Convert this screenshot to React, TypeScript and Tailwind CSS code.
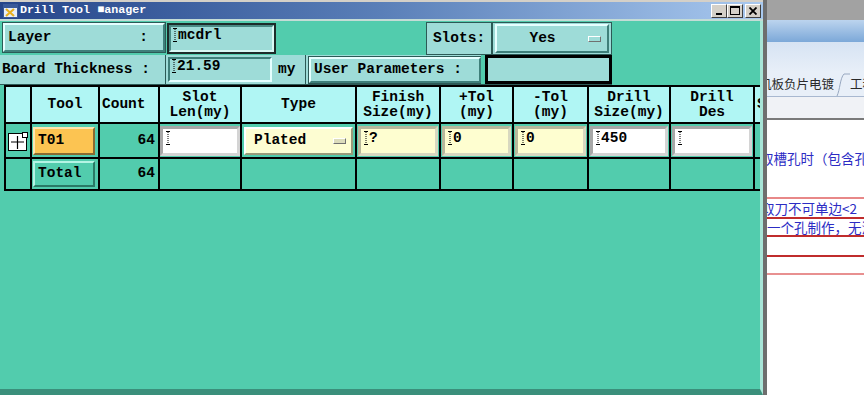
import React from 'react'

const mono = "font-['Liberation_Mono',monospace] font-bold text-[14.5px] text-black"
const raised = 'border-2 border-t-[#e6ffff] border-l-[#e6ffff] border-b-[#3f7f7a] border-r-[#3f7f7a]'
const cjk = "font-['Noto_Sans_CJK_SC',sans-serif]"

function Cursor() {
  return (
    <svg width="4" height="14" viewBox="0 0 4 14" className="shrink-0">
      <path d="M0 0.5h4M0 13.5h4" stroke="#000" strokeWidth="1" />
      <path d="M2 1v12" stroke="#000" strokeWidth="1" strokeDasharray="1 1" />
    </svg>
  )
}

function Indicator({ face }: { face: string }) {
  return (
    <span
      className={`w-[13px] h-[6px] border border-t-white border-l-white border-b-[#707070] border-r-[#707070] ${face}`}
    />
  )
}

function ExpandIcon() {
  return (
    <svg width="21" height="19" viewBox="0 0 21 19">
      <rect x="0.5" y="1.5" width="18" height="17" fill="#fff" stroke="#000" />
      <path d="M3 10h13M9.5 4v13" stroke="#000" strokeWidth="1.2" />
      <rect x="14.5" y="0.5" width="5" height="5" fill="#fff" stroke="#000" />
    </svg>
  )
}

function Field({ value, bg, border }: { value: string; bg: string; border: string }) {
  return (
    <div className={`h-full w-full border-[3px] ${border} ${bg} flex items-start pt-[2px] pl-[3px] gap-[1px]`}>
      <Cursor />
      <span className="leading-[15px]">{value}</span>
    </div>
  )
}

function WinButton({ children }: { children: React.ReactNode }) {
  return (
    <div className="w-[16px] h-[14px] bg-[#d4d0c8] border border-t-white border-l-white border-b-[#404040] border-r-[#404040] flex items-center justify-center">
      {children}
    </div>
  )
}

const headers: { lines: string[]; left?: boolean }[] = [
  { lines: [] },
  { lines: ['Tool'] },
  { lines: ['Count'], left: true },
  { lines: ['Slot', 'Len(my)'] },
  { lines: ['Type'] },
  { lines: ['Finish', 'Size(my)'] },
  { lines: ['+Tol', '(my)'] },
  { lines: ['-Tol', '(my)'] },
  { lines: ['Drill', 'Size(my)'] },
  { lines: ['Drill', 'Des'] },
  { lines: ['S'], left: true },
]

export default function App() {
  return (
    <div className="w-[864px] h-[395px] flex overflow-hidden bg-white">
      {/* Drill Tool Manager window */}
      <div className="w-[763px] h-full flex flex-col shrink-0">
        {/* Title bar */}
        <div className="h-[21px] border-t-2 border-t-[#d4d0c8] border-b-2 border-b-[#c4dcd6] bg-gradient-to-r from-[#26458a] via-[#5a7fb8] to-[#a9c9ef] flex items-center pl-[3px] pr-[2px]">
          <svg width="15" height="14" viewBox="0 0 15 14" className="shrink-0">
            <rect x="0.5" y="0.5" width="14" height="13" fill="#e8eef8" stroke="#3a5a9a" />
            <rect x="1" y="1" width="13" height="3" fill="#3a5a9a" />
            <path d="M3 5l8 7M11 5l-8 7" stroke="#e8b020" strokeWidth="2.2" />
          </svg>
          <span className="ml-[2px] font-['Liberation_Mono',monospace] font-bold text-[11.7px] text-white leading-none">
            Drill Tool ■anager
          </span>
          <div className="ml-auto flex items-center">
            <WinButton>
              <span className="w-[6px] h-[2px] bg-black mt-[7px]" />
            </WinButton>
            <WinButton>
              <span className="w-[10px] h-[9px] border border-black border-t-2" />
            </WinButton>
            <div className="w-[2px]" />
            <WinButton>
              <svg width="8" height="8" viewBox="0 0 8 8">
                <path d="M0.5 0.5l7 7M7.5 0.5l-7 7" stroke="#000" strokeWidth="1.8" />
              </svg>
            </WinButton>
          </div>
        </div>

        {/* Body */}
        <div className={`flex-1 bg-[#52ccad] overflow-hidden flex flex-col border-b-[6px] border-b-[#3b8f7b] border-r-[3px] border-r-[#a8e6d8] ${mono}`}>
          {/* Layer / Slots row */}
          <div className="h-[34px] flex items-start pt-[2px] pl-[3px]">
            <div className={`w-[162px] h-[29px] bg-[#9edcd8] ${raised} shadow-[0_0_0_1px_#2c5a56] flex items-center justify-between px-[3px]`}>
              <span>Layer</span>
              <span className="mr-[12px]">:</span>
            </div>
            <div className="ml-[2px] w-[109px] h-[31px] border-2 border-[#1c2c2a] bg-[#9edcd8]">
              <div className="h-full border-2 border-t-[#4a8a84] border-l-[#4a8a84] border-b-[#d8f8f4] border-r-[#d8f8f4] flex items-start pt-[1px] pl-[2px] gap-[1px]">
                <Cursor />
                <span className="leading-[14px]">mcdrl</span>
              </div>
            </div>
            <div className="ml-[150px] w-[186px] h-[33px] -mt-[1px] bg-[#9edcd8] border border-[#2c5a56] flex items-center">
              <div className="w-[66px] h-full flex items-center justify-center border-r-2 border-r-[#2c5a56]">Slots:</div>
              <div className={`ml-[2px] w-[114px] h-[29px] bg-[#9edcd8] ${raised} flex items-center pr-[6px]`}>
                <span className="flex-1 text-center">Yes</span>
                <Indicator face="bg-[#9edcd8]" />
              </div>
            </div>
          </div>

          {/* Board thickness row */}
          <div className="h-[30px] flex items-stretch">
            <div className="w-[612px] bg-[#9edcd8] flex items-center border-b border-b-[#2c5a56]">
              <div className="w-[166px] h-full flex items-center pl-[2px] border-r border-r-[#2c5a56]">Board Thickness :</div>
              <div className="ml-[2px] w-[104px] h-[25px] border-2 border-t-[#3f7f7a] border-l-[#3f7f7a] border-b-[#e6ffff] border-r-[#e6ffff] flex items-start pl-[2px] gap-[1px]">
                <Cursor />
                <span className="leading-[14px]">21.59</span>
              </div>
              <div className="w-[34px] h-full flex items-center pl-[6px] border-r border-r-[#2c5a56]">my</div>
              <div className={`ml-[3px] w-[172px] h-[26px] bg-[#9edcd8] ${raised} shadow-[0_0_0_1px_#2c5a56] flex items-center pl-[3px]`}>
                User Parameters :
              </div>
              <div className="w-[4px] h-full bg-[#52ccad]" />
              <div className="w-[127px] h-full border-[3px] border-black bg-[#9edcd8]" />
            </div>
          </div>

          {/* Tool table */}
          <div className="ml-[4px] grid grid-cols-[24px_66px_58px_80px_113px_82px_71px_73px_80px_82px_40px] grid-rows-[35px_33px_30px] gap-[2px] p-[2px] bg-black w-max">
            {headers.map((h, i) => (
              <div
                key={i}
                className={`bg-[#b0f6f4] flex flex-col justify-center leading-[15px] overflow-hidden ${h.left ? 'items-start pl-[2px]' : 'items-center'}`}
              >
                {h.lines.map((l) => (
                  <span key={l} className="whitespace-nowrap">{l}</span>
                ))}
              </div>
            ))}

            {/* T01 row */}
            <div className="bg-[#52ccad] flex items-center justify-center pt-[2px]">
              <ExpandIcon />
            </div>
            <div className="bg-[#52ccad] pl-[1px] pr-[3px] pt-[3px] pb-[2px]">
              <div className="h-full bg-[#fcc452] border-2 border-t-[#ffe6b0] border-l-[#ffe6b0] border-b-[#8a6a30] border-r-[#8a6a30] flex items-center pl-[3px]">
                T01
              </div>
            </div>
            <div className="bg-[#52ccad] flex items-center justify-end pr-[3px]">64</div>
            <div className="bg-[#52ccad] pt-[2px] pb-[1px]">
              <Field value="" bg="bg-white" border="border-t-[#a8a8a8] border-l-[#a8a8a8] border-b-[#d4d4d4] border-r-[#d4d4d4]" />
            </div>
            <div className="bg-[#52ccad] p-[2px] pt-[3px]">
              <div className="h-full bg-[#fdfdd2] border-2 border-t-white border-l-white border-b-[#9a9a7a] border-r-[#9a9a7a] flex items-center pl-[8px] pr-[5px]">
                <span className="flex-1">Plated</span>
                <Indicator face="bg-[#dcdcbc]" />
              </div>
            </div>
            <div className="bg-[#52ccad] p-[1px] pt-[2px]">
              <Field value="?" bg="bg-[#fefed0]" border="border-t-[#b8b89c] border-l-[#b8b89c] border-b-[#d8d8c0] border-r-[#d8d8c0]" />
            </div>
            <div className="bg-[#52ccad] p-[1px] pt-[2px]">
              <Field value="0" bg="bg-[#fefed0]" border="border-t-[#b8b89c] border-l-[#b8b89c] border-b-[#d8d8c0] border-r-[#d8d8c0]" />
            </div>
            <div className="bg-[#52ccad] p-[1px] pt-[2px]">
              <Field value="0" bg="bg-[#fefed0]" border="border-t-[#b8b89c] border-l-[#b8b89c] border-b-[#d8d8c0] border-r-[#d8d8c0]" />
            </div>
            <div className="bg-[#52ccad] p-[1px] pt-[2px]">
              <Field value="450" bg="bg-white" border="border-t-[#a8a8a8] border-l-[#a8a8a8] border-b-[#d4d4d4] border-r-[#d4d4d4]" />
            </div>
            <div className="bg-[#52ccad] p-[1px] pt-[2px]">
              <Field value="" bg="bg-white" border="border-t-[#a8a8a8] border-l-[#a8a8a8] border-b-[#d4d4d4] border-r-[#d4d4d4]" />
            </div>
            <div className="bg-[#52ccad]" />

            {/* Total row */}
            <div className="bg-[#52ccad]" />
            <div className="bg-[#52ccad] pl-[1px] pr-[3px] pt-[2px] pb-[2px]">
              <div className="h-full bg-[#52ccad] border-2 border-t-[#b4f4e4] border-l-[#b4f4e4] border-b-[#2a7a66] border-r-[#2a7a66] flex items-center pl-[3px]">
                Total
              </div>
            </div>
            <div className="bg-[#52ccad] flex items-center justify-end pr-[3px]">64</div>
            {Array.from({ length: 8 }).map((_, i) => (
              <div key={i} className="bg-[#52ccad]" />
            ))}
          </div>
        </div>
      </div>

      {/* Background application */}
      <div className="flex-1 flex flex-col border-l-4 border-l-[#6e6e6e] overflow-hidden">
        <div className="h-[20px] bg-[#a2a2a2] shrink-0" />
        <div className="h-[22px] bg-gradient-to-b from-[#bcd4ee] to-[#7ca8d8] shrink-0" />
        <div className="h-[30px] bg-gradient-to-b from-[#d6e3f3] to-[#e8eff8] shrink-0" />
        <div className={`h-[24px] bg-[#e8eff8] flex items-center text-[12.5px] text-[#2a2a2a] whitespace-nowrap ${cjk} shrink-0`}>
          <span className="-ml-[8px]">机板负片电镀</span>
          <svg width="14" height="24" viewBox="0 0 14 24" className="shrink-0 ml-[2px]">
            <path d="M1 24C4 18 4 6 8 2h6" stroke="#98a8c0" fill="none" />
          </svg>
          <span>工程</span>
        </div>
        <div className="h-[22px] bg-[#f0f2f6] border-t border-t-[#a8b8d0] shrink-0" />
        <div className="h-[2px] bg-[#7a7a7a] shrink-0" />
        <div className={`flex-1 bg-white flex flex-col text-[13.5px] text-[#2c2cc4] whitespace-nowrap ${cjk}`}>
          <div className="h-[29px]" />
          <div className="-ml-[7px] leading-[18px]">取槽孔时（包含孔</div>
          <div className="h-[30px]" />
          <div className="h-[2px] bg-[#e88888]" />
          <div className="-ml-[6px] leading-[18px]">取刀不可单边&lt;2</div>
          <div className="h-[2px] bg-[#c02c2c]" />
          <div className="leading-[16px]">一个孔制作，无法</div>
          <div className="h-[2px] bg-[#c02c2c]" />
          <div className="h-[18px]" />
          <div className="h-[2px] bg-[#c02c2c]" />
          <div className="h-[16px]" />
          <div className="h-[2px] bg-[#e89090]" />
        </div>
      </div>
    </div>
  )
}
